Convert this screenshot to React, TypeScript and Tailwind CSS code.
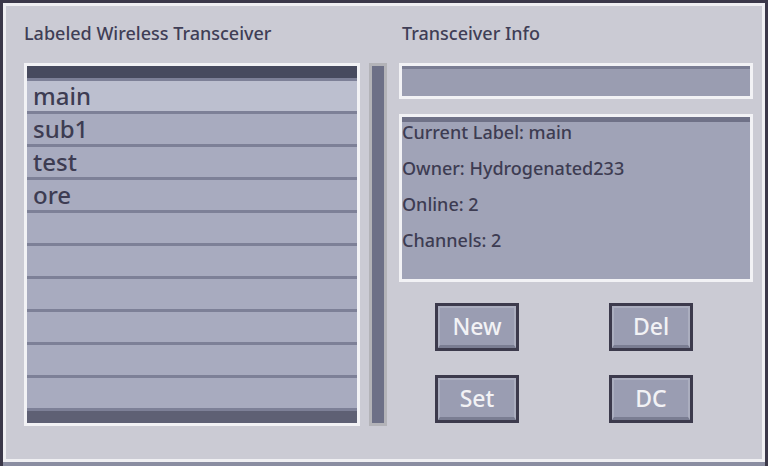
import React from 'react';

const labels = ['main', 'sub1', 'test', 'ore', '', '', '', '', '', ''];

const info = ['Current Label: main', 'Owner: Hydrogenated233', 'Online: 2', 'Channels: 2'];

// Botón estilo GUI con borde oscuro y bisel claro
const GuiButton: React.FC<{ label: string }> = ({ label }) => (
  <button className="w-[84px] h-[48px] border-[3px] border-[#3c3a4c] bg-[#3c3a4c] p-0">
    <div className="h-full border-t-2 border-x-2 border-[#abaebf] border-b-[3px] border-b-[#7a7d92] bg-[#9a9db2] text-[#f2f2f5] text-[23px] leading-[37px] text-center">
      {label}
    </div>
  </button>
);

const App: React.FC = () => {
  return (
    <div className="w-[768px] h-[466px] bg-[#3b3849] font-['Noto_Sans',sans-serif] font-medium overflow-hidden">
      <div className="mx-[3px] pt-[3px] flex flex-col h-full">
        <div className="h-[459px] border-[3px] border-[#efeff2] bg-[#cbcbd4] flex pl-[18px] pt-[15px]">
          {/* Columna izquierda: lista de etiquetas */}
          <div className="flex flex-col">
            <h2 className="text-[18px] leading-[24px] text-[#3f3e56]">Labeled Wireless Transceiver</h2>
            <div className="mt-[18px] flex">
              <div className="w-[336px] h-[363px] border-[3px] border-[#f2f2f5] flex flex-col">
                <div className="h-[12px] bg-[#474a5e]" />
                {labels.map((label, i) => (
                  <div
                    key={i}
                    className={`h-[33px] border-t-[3px] border-[#7d8097] pl-[6px] text-[24px] leading-[30px] text-[#3d3c52] ${
                      i === 0 ? 'bg-[#bcbfcf]' : 'bg-[#a8abbf]'
                    }`}
                  >
                    {label}
                  </div>
                ))}
                <div className="h-[15px] border-t-[3px] border-[#7d8097] bg-[#5e6074]" />
              </div>
              <div className="ml-[9px] w-[18px] h-[363px] border-[3px] border-[#b3b3b8] bg-[#6d7087]" />
            </div>
          </div>

          {/* Columna derecha: información */}
          <div className="ml-[12px] w-[354px] flex flex-col">
            <h2 className="pl-[3px] text-[18px] leading-[24px] text-[#3f3e56]">Transceiver Info</h2>
            <div className="mt-[18px] h-[36px] border-[3px] border-[#f2f2f5]">
              <div className="h-full border-t-[3px] border-[#7a7d93] bg-[#9a9db1]" />
            </div>
            <div className="mt-[15px] h-[168px] border-[3px] border-[#f2f2f5] bg-[#a0a3b7] flex flex-col">
              <div className="h-[5px] bg-[#6f7187]" />
              <div className="flex flex-col gap-[16px] text-[18px] leading-[20px] text-[#3d3c52]">
                {info.map((line) => (
                  <p key={line}>{line}</p>
                ))}
              </div>
            </div>
            <div className="mt-[21px] pl-[36px] flex flex-col gap-[24px]">
              <div className="flex gap-[90px]">
                <GuiButton label="New" />
                <GuiButton label="Del" />
              </div>
              <div className="flex gap-[90px]">
                <GuiButton label="Set" />
                <GuiButton label="DC" />
              </div>
            </div>
          </div>
        </div>
        <div className="flex-1 bg-[#8a8da1]" />
      </div>
    </div>
  );
};

export default App;
